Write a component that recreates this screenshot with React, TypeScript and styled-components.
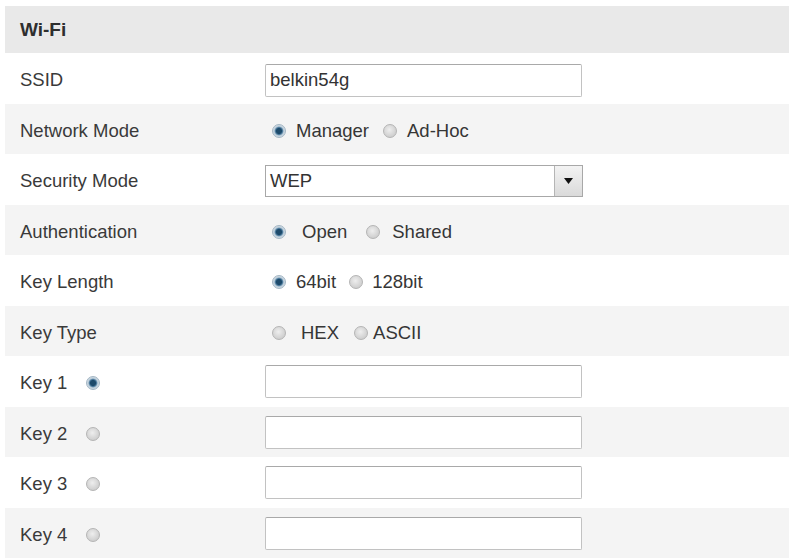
import React from 'react';
import styled, { createGlobalStyle } from 'styled-components';

const Global = createGlobalStyle`
  html, body {
    margin: 0;
    padding: 0;
    background: #ffffff;
  }
  body {
    font-family: "Liberation Sans", Arial, sans-serif;
    color: #363636;
  }
`

const Panel = styled.div`
  padding: 6px 3px 0 5px;
  width: 784px;
`

const Header = styled.div`
  height: 47px;
  background: #e9e9e9;
  display: flex;
  align-items: center;
  padding-left: 15px;
  font-size: 19px;
  font-weight: bold;
  color: #2e2e2e;
`

const Row = styled.div<{ $shade: boolean }>`
  height: 50.5px;
  display: grid;
  grid-template-columns: 260px 1fr;
  align-items: center;
  background: ${p => (p.$shade ? '#f4f4f4' : '#ffffff')};
`

const Label = styled.div`
  padding: 4px 0 0 15px;
  font-size: 18.5px;
  color: #3a3a3a;
  display: flex;
  align-items: center;
  gap: 19px;
`

const Field = styled.div<{ $shift: number }>`
  display: flex;
  align-items: center;
  padding-top: ${p => p.$shift}px;
`

const TextBox = styled.input`
  box-sizing: border-box;
  width: 317px;
  height: 33px;
  border: 1px solid #c2c2c2;
  border-top-color: #a9a9a9;
  border-radius: 2px;
  background: #fff;
  padding: 0 4px;
  font-family: "Liberation Sans", Arial, sans-serif;
  font-size: 18.5px;
  color: #333;
  outline: none;
`

const Select = styled.div`
  box-sizing: border-box;
  width: 318px;
  height: 32px;
  border: 1px solid #a8a8a8;
  display: flex;
  align-items: stretch;
  background: #fff;
`

const SelectValue = styled.div`
  flex: 1;
  display: flex;
  align-items: center;
  padding-left: 4px;
  font-size: 18.5px;
  color: #333;
`

const SelectButton = styled.div`
  width: 27px;
  border-left: 1px solid #b5b5b5;
  background: linear-gradient(#f3f3f3, #dadada);
  display: flex;
  align-items: center;
  justify-content: center;
`

const Options = styled.div`
  display: flex;
  align-items: center;
  padding: 4px 0 0 7px;
  font-size: 18.5px;
  color: #363636;
`

const Option = styled.label<{ $lead: number; $gap: number }>`
  display: flex;
  align-items: center;
  margin-right: ${p => p.$gap}px;
  span + span {
    margin-left: ${p => p.$lead}px;
  }
`

const Radio = styled.span<{ $on?: boolean }>`
  display: inline-block;
  flex: none;
  width: 14px;
  height: 14px;
  border-radius: 50%;
  box-sizing: border-box;
  border: 1px solid ${p => (p.$on ? '#a4b6c4' : '#b4b4b4')};
  background: ${p =>
    p.$on
      ? 'radial-gradient(circle, #1d4a6b 0 2.6px, #4f7d9f 3.6px, #bfcfdb 4.8px, #e6edf2 100%)'
      : 'radial-gradient(circle at 45% 40%, #eeeeee 0, #d6d6d6 55%, #c4c4c4 100%)'};
`

const Text = styled.span``

type Choice = { text: string; on?: boolean; lead: number; gap: number }

const Choices = ({ items }: { items: Choice[] }) => (
  <Options>
    {items.map(c => (
      <Option key={c.text} $lead={c.lead} $gap={c.gap}>
        <Radio $on={c.on} />
        <Text>{c.text}</Text>
      </Option>
    ))}
  </Options>
)

const Arrow = () => (
  <svg width="9" height="6" viewBox="0 0 9 6">
    <path d="M0 0 H9 L4.5 6 Z" fill="#111" />
  </svg>
)

export default function App() {
  return (
    <Panel>
      <Global />
      <Header>Wi-Fi</Header>
      <Row $shade={false}>
        <Label>SSID</Label>
        <Field $shift={4}>
          <TextBox defaultValue="belkin54g" />
        </Field>
      </Row>
      <Row $shade>
        <Label>Network Mode</Label>
        <Choices
          items={[
            { text: 'Manager', on: true, lead: 10, gap: 14 },
            { text: 'Ad-Hoc', lead: 10, gap: 0 },
          ]}
        />
      </Row>
      <Row $shade={false}>
        <Label>Security Mode</Label>
        <Field $shift={4}>
          <Select>
            <SelectValue>WEP</SelectValue>
            <SelectButton>
              <Arrow />
            </SelectButton>
          </Select>
        </Field>
      </Row>
      <Row $shade>
        <Label>Authentication</Label>
        <Choices
          items={[
            { text: 'Open', on: true, lead: 16, gap: 19 },
            { text: 'Shared', lead: 12, gap: 0 },
          ]}
        />
      </Row>
      <Row $shade={false}>
        <Label>Key Length</Label>
        <Choices
          items={[
            { text: '64bit', on: true, lead: 10, gap: 13 },
            { text: '128bit', lead: 9, gap: 0 },
          ]}
        />
      </Row>
      <Row $shade>
        <Label>Key Type</Label>
        <Choices
          items={[
            { text: 'HEX', lead: 15, gap: 15 },
            { text: 'ASCII', lead: 5, gap: 0 },
          ]}
        />
      </Row>
      {[1, 2, 3, 4].map(n => (
        <Row key={n} $shade={n % 2 === 0}>
          <Label>
            Key {n}
            <Radio $on={n === 1} />
          </Label>
          <Field $shift={1}>
            <TextBox />
          </Field>
        </Row>
      ))}
    </Panel>
  );
}
